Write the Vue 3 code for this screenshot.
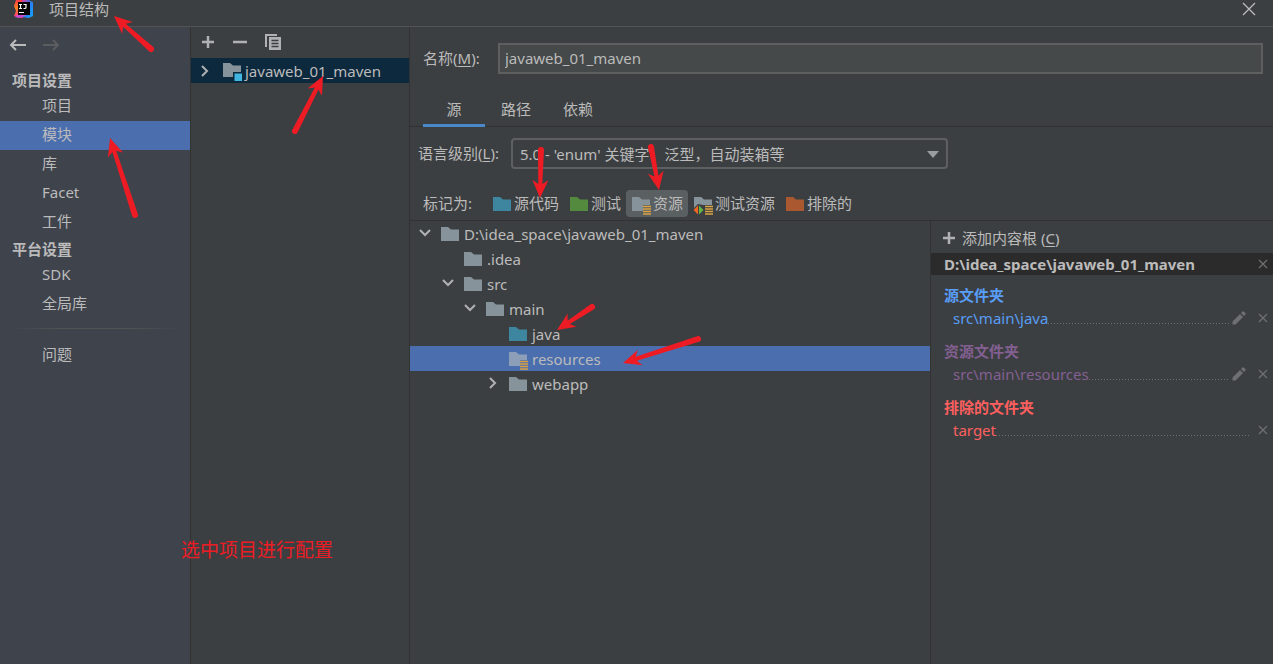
<script setup>
import { ref } from 'vue'

const projectItems = ['项目', '模块', '库', 'Facet', '工件']
const platformItems = ['SDK', '全局库']
const activeItem = ref('模块')

const tabs = ['源', '路径', '依赖']
const activeTab = ref('源')

const moduleName = ref('javaweb_01_maven')
const level = ref('5')

const marks = [
  { label: '源代码', kind: 'source' },
  { label: '测试', kind: 'test' },
  { label: '资源', kind: 'resource' },
  { label: '测试资源', kind: 'test-resource' },
  { label: '排除的', kind: 'excluded' },
]
const activeMark = ref('资源')

const tree = [
  { name: 'D:\\idea_space\\javaweb_01_maven', depth: 0, chevron: 'down', kind: 'plain' },
  { name: '.idea', depth: 1, chevron: '', kind: 'plain' },
  { name: 'src', depth: 1, chevron: 'down', kind: 'plain' },
  { name: 'main', depth: 2, chevron: 'down', kind: 'plain' },
  { name: 'java', depth: 3, chevron: '', kind: 'source' },
  { name: 'resources', depth: 3, chevron: '', kind: 'resource' },
  { name: 'webapp', depth: 3, chevron: 'right', kind: 'plain' },
]
const activeNode = ref('resources')

const groups = [
  { title: '源文件夹', path: 'src\\main\\java', tone: 'blue', editable: true },
  { title: '资源文件夹', path: 'src\\main\\resources', tone: 'purple', editable: true },
  { title: '排除的文件夹', path: 'target', tone: 'red', editable: false },
]

// Each arrow: tip x, tip y, tail x, tail y
const arrows = [
  [114, 16, 151, 49],
  [110, 138, 135, 215],
  [323, 76, 295, 131],
  [540, 198, 541, 150],
  [659, 190, 651, 147],
  [557, 330, 592, 307],
  [623, 363, 698, 339],
].map(([x, y, tx, ty]) => {
  const length = Math.hypot(tx - x, ty - y)
  const angle = (Math.atan2(ty - y, tx - x) * 180) / Math.PI
  return {
    transform: `translate(${x} ${y}) rotate(${angle})`,
    d: `M0 0L18 -8L14 -2L${length} -3A3 3 0 0 1 ${length} 3L14 2L18 8Z`,
  }
})

const folderFill = {
  plain: '#87939a',
  source: '#3e86a0',
  test: '#538a3e',
  resource: '#87939a',
  'test-resource': '#87939a',
  excluded: '#a9582f',
}
</script>

<template>
  <div class="window">
    <header class="titlebar">
      <svg class="logo" width="22" height="22" viewBox="0 0 22 22" aria-hidden="true">
        <defs>
          <linearGradient id="logo-left" x1="0" y1="0" x2="0" y2="1">
            <stop offset="0" stop-color="#fe2857" />
            <stop offset="0.5" stop-color="#fc801d" />
            <stop offset="1" stop-color="#ff318c" />
          </linearGradient>
          <linearGradient id="logo-right" x1="0" y1="0" x2="1" y2="1">
            <stop offset="0" stop-color="#ff318c" />
            <stop offset="0.5" stop-color="#2b7df5" />
            <stop offset="1" stop-color="#12a5fa" />
          </linearGradient>
        </defs>
        <path d="M3 3L9 1L12 12L10 21L4 20L1 19L3 14L1 9Z" fill="url(#logo-left)" />
        <path d="M9 1L15 1L17 4L20 5L20 19L16 21L9 20Z" fill="url(#logo-right)" />
        <path d="M4 18H14L9 20L6 21L2 20Z" fill="#c34dd0" />
        <rect x="5" y="5" width="12" height="13" fill="#050505" />
        <path d="M6 7.500h3M7.500 7.500v4M6 11.500h3M10.500 7.500h2.500v3q0 1-1.200 1H10.500M6 15.500h5" stroke="#fff" stroke-width="1.200" fill="none" />
      </svg>
      <h1>项目结构</h1>
      <button class="close" type="button" aria-label="关闭">
        <svg width="14" height="14" viewBox="0 0 14 14"><path d="M1 1L13 13M13 1L1 13" stroke="#bbb" stroke-width="1.300" /></svg>
      </button>
    </header>

    <div class="body">
      <nav class="sidebar">
        <div class="history">
          <button type="button" aria-label="后退">
            <svg width="18" height="14" viewBox="0 0 18 14"><path d="M17 7H2M7 2L2 7L7 12" fill="none" stroke="#bbb" stroke-width="2" /></svg>
          </button>
          <button type="button" aria-label="前进" disabled>
            <svg width="18" height="14" viewBox="0 0 18 14"><path d="M1 7H16M11 2L16 7L11 12" fill="none" stroke="#5b5d5f" stroke-width="2" /></svg>
          </button>
        </div>
        <h2>项目设置</h2>
        <button v-for="item in projectItems" :key="item" type="button" class="nav-item" :class="{ active: item === activeItem }" @click="activeItem = item">{{ item }}</button>
        <h2>平台设置</h2>
        <button v-for="item in platformItems" :key="item" type="button" class="nav-item" :class="{ active: item === activeItem }" @click="activeItem = item">{{ item }}</button>
        <hr />
        <button type="button" class="nav-item" :class="{ active: activeItem === '问题' }" @click="activeItem = '问题'">问题</button>
      </nav>

      <section class="modules">
        <div class="tools">
          <button type="button" aria-label="添加">
            <svg width="14" height="14" viewBox="0 0 14 14"><path d="M7 1V13M1 7H13" stroke="#afb1b3" stroke-width="2.500" /></svg>
          </button>
          <button type="button" aria-label="移除">
            <svg width="14" height="14" viewBox="0 0 14 14"><path d="M0 7H14" stroke="#afb1b3" stroke-width="2.500" /></svg>
          </button>
          <button type="button" aria-label="复制">
            <svg width="18" height="18" viewBox="0 0 18 18">
              <path d="M0 14V1H12V3H2V14Z" fill="#afb1b3" />
              <path d="M4 4H16V17H4Z" fill="#afb1b3" />
              <path d="M6.500 7.500H13.500M6.500 10.500H13.500M6.500 13.500H13.500" stroke="#3c3f41" stroke-width="1.300" />
            </svg>
          </button>
        </div>
        <button type="button" class="module">
          <svg class="twist" width="14" height="14" viewBox="0 0 14 14"><path d="M4 2L9 7L4 12" fill="none" stroke="#afb1b3" stroke-width="2" /></svg>
          <svg width="20" height="20" viewBox="0 0 20 20">
            <path d="M1 2H8L11 4.500H19V16H1Z" fill="#87939a" />
            <path d="M11 11H20V20H11Z" fill="#0d293e" />
            <path d="M12.500 12.500H20V20H12.500Z" fill="#40b6e0" />
          </svg>
          <span>javaweb_01_maven</span>
        </button>
      </section>

      <main class="editor">
        <div class="name-row">
          <label for="module-name">名称(<u>M</u>):</label>
          <input id="module-name" v-model="moduleName" type="text" />
        </div>

        <div class="tabs" role="tablist">
          <button v-for="tab in tabs" :key="tab" type="button" role="tab" :aria-selected="tab === activeTab" :class="{ active: tab === activeTab }" @click="activeTab = tab">{{ tab }}</button>
        </div>

        <div class="level-row">
          <label for="level">语言级别(<u>L</u>):</label>
          <div class="select-box">
            <select id="level" v-model="level">
              <option value="5">5.0 - 'enum' 关键字，泛型，自动装箱等</option>
            </select>
            <svg width="12" height="8" viewBox="0 0 12 8" aria-hidden="true"><path d="M0 1H12L6 8Z" fill="#9a9da0" /></svg>
          </div>
        </div>

        <div class="mark-row">
          <span class="mark-label">标记为:</span>
          <button v-for="mark in marks" :key="mark.label" type="button" :class="{ active: mark.label === activeMark }" @click="activeMark = mark.label">
            <svg width="20" height="20" viewBox="0 0 20 20">
              <path v-if="mark.kind === 'resource'" d="M1 2H8L11 4.500H19V10H12V16H1Z" :fill="folderFill[mark.kind]" />
              <path v-else-if="mark.kind === 'test-resource'" d="M1 2H8L11 4.500H19V10H10L5 9L1 13Z" :fill="folderFill[mark.kind]" />
              <path v-else d="M1 2H8L11 4.500H19V16H1Z" :fill="folderFill[mark.kind]" />
              <path v-if="mark.kind.includes('resource')" d="M12 11.500H20M12 14H20M12 16.500H20M12 19H20" stroke="#d9a343" stroke-width="1.400" />
              <template v-if="mark.kind === 'test-resource'">
                <path d="M5 10.500V19.500L0.500 15Z" fill="#f26522" />
                <path d="M6 10.500V19.500L10.500 15Z" fill="#62b543" />
              </template>
            </svg>
            <span>{{ mark.label }}</span>
          </button>
        </div>

        <div class="content">
          <div class="tree" role="tree">
            <div v-for="node in tree" :key="node.name" role="treeitem" class="node" :class="['depth-' + node.depth, { active: node.name === activeNode }]" @click="activeNode = node.name">
              <svg class="twist" width="14" height="14" viewBox="0 0 14 14">
                <path v-if="node.chevron === 'down'" d="M2 3L7 8L12 3" fill="none" stroke="#afb1b3" stroke-width="2" />
                <path v-if="node.chevron === 'right'" d="M4 1L9 6L4 11" fill="none" stroke="#afb1b3" stroke-width="2" />
              </svg>
              <svg class="folder" width="20" height="20" viewBox="0 0 20 20">
                <path v-if="node.kind === 'resource'" d="M1 2H8L11 4.500H19V10H12V16H1Z" fill="#8d9fb8" />
                <path v-else d="M1 2H8L11 4.500H19V16H1Z" :fill="folderFill[node.kind]" />
                <path v-if="node.kind === 'resource'" d="M12 11.500H20M12 14H20M12 16.500H20M12 19H20" stroke="#d9a343" stroke-width="1.400" />
              </svg>
              <span>{{ node.name }}</span>
            </div>
          </div>

          <aside class="roots">
            <button type="button" class="add-root">
              <svg width="14" height="14" viewBox="0 0 14 14"><path d="M7 1V13M1 7H13" stroke="#afb1b3" stroke-width="2.500" /></svg>
              <span>添加内容根 (<u>C</u>)</span>
            </button>
            <div class="root-head">
              <strong>D:\idea_space\javaweb_01_maven</strong>
              <button type="button" aria-label="移除内容根">
                <svg width="10" height="10" viewBox="0 0 10 10"><path d="M1 1L9 9M9 1L1 9" stroke="#6e7072" stroke-width="1.200" /></svg>
              </button>
            </div>
            <section v-for="group in groups" :key="group.title" class="group" :class="group.tone">
              <h3>{{ group.title }}</h3>
              <div class="entry">
                <a href="#">{{ group.path }}</a>
                <i class="dots"></i>
                <button v-if="group.editable" type="button" class="edit" aria-label="编辑">
                  <svg width="14" height="14" viewBox="0 0 14 14"><path d="M0.500 13.500V10.500L8 3L11 6L3.500 13.500ZM9 2L10.500 0.500Q11.200 0 12 0.700L13.300 2Q14 2.800 13.500 3.500L12 5Z" fill="#6e7072" /></svg>
                </button>
                <button type="button" aria-label="移除">
                  <svg width="10" height="10" viewBox="0 0 10 10"><path d="M1 1L9 9M9 1L1 9" stroke="#6e7072" stroke-width="1.200" /></svg>
                </button>
              </div>
            </section>
          </aside>
        </div>
      </main>
    </div>

    <svg class="arrows" aria-hidden="true">
      <path v-for="arrow in arrows" :key="arrow.transform" :d="arrow.d" :transform="arrow.transform" fill="#ed1c24" />
    </svg>
    <p class="note">选中项目进行配置</p>
  </div>
</template>

<style>
body {
  margin: 0;
  background: #3c3f41;
}
</style>

<style scoped>
.window {
  position: relative;
  display: flex;
  flex-direction: column;
  min-height: 100vh;
  overflow: hidden;
  background: #3c3f41;
  color: #bbb;
  font: 15px/20px "Noto Sans", "Noto Sans CJK SC", sans-serif;
}
.window * {
  box-sizing: border-box;
}
h1, h2, h3, p {
  margin: 0;
  font-size: 15px;
}
svg {
  display: block;
  flex: none;
}
button {
  margin: 0;
  padding: 0;
  border: 0;
  background: none;
  color: inherit;
  font: inherit;
  white-space: nowrap;
}
button, input, select {
  outline: none;
}
u {
  text-underline-offset: 2px;
}

.titlebar {
  display: flex;
  align-items: flex-start;
  height: 27px;
  padding: 0 17px 0 13px;
  border-bottom: 1px solid #515355;
}
.logo {
  margin-top: -3px;
}
h1 {
  flex: 1;
  margin-left: 14px;
  font-weight: 400;
  line-height: 18px;
}
.close {
  padding-top: 2px;
}

.body {
  display: flex;
  flex: 1;
}
.sidebar {
  display: flex;
  flex-direction: column;
  width: 191px;
  border-right: 1px solid #323232;
  background: #3f434c;
}
.history {
  display: flex;
  gap: 15px;
  height: 41px;
  padding: 11px 9px 0;
  align-items: flex-start;
}
h2 {
  padding-left: 12px;
  line-height: 24px;
  font-weight: 700;
}
.nav-item {
  padding: 0 0 2px 42px;
  line-height: 27px;
  text-align: left;
}
.nav-item.active {
  background: #4b6eaf;
}
hr {
  width: 170px;
  height: 1px;
  margin: 9px 0 12px 10px;
  border: 0;
  background: linear-gradient(90deg, transparent, #515355 30%, #515355 70%, transparent);
}

.modules {
  width: 219px;
  border-right: 1px solid #323232;
}
.tools {
  display: flex;
  align-items: center;
  gap: 18px;
  height: 31px;
  padding: 0 0 2px 10px;
}
.module {
  display: flex;
  align-items: center;
  width: 100%;
  height: 25px;
  padding-left: 7px;
  background: #0d293e;
}
.module .twist {
  margin-right: 10px;
}
.module span {
  margin-left: 3px;
}

.editor {
  display: flex;
  flex: 1;
  flex-direction: column;
  min-width: 0;
}
.name-row {
  display: flex;
  align-items: center;
  padding: 16px 10px 0 13px;
}
.name-row label {
  width: 75px;
  padding-bottom: 2px;
}
input {
  flex: 1;
  height: 31px;
  min-width: 0;
  padding: 0 5px 2px;
  border: 2px solid #5e6060;
  border-radius: 0;
  background: #45494a;
  color: inherit;
  font: inherit;
}
.tabs {
  display: flex;
  margin-top: 20px;
  padding-left: 13px;
  border-bottom: 1px solid #323232;
}
.tabs button {
  min-width: 62px;
  height: 33px;
  margin-bottom: -1px;
  border-bottom: 3px solid transparent;
}
.tabs .active {
  border-bottom-color: #4a88c7;
}
.level-row {
  display: flex;
  align-items: center;
  margin-top: 11px;
  padding-left: 8px;
}
.level-row label {
  width: 93px;
  padding-bottom: 2px;
}
.select-box {
  position: relative;
  flex: 0 1 437px;
}
select {
  width: 100%;
  height: 31px;
  padding: 0 30px 0 7px;
  border: 2px solid #5e6060;
  border-radius: 4px;
  appearance: none;
  background: #3c3f41;
  color: inherit;
  font: inherit;
}
.select-box svg {
  position: absolute;
  top: 12px;
  right: 9px;
  pointer-events: none;
}
.mark-row {
  display: flex;
  align-items: center;
  margin-top: 21px;
  padding: 0 0 3px 13px;
  border-bottom: 1px solid #323232;
}
.mark-row span {
  padding-bottom: 2px;
}
.mark-label {
  width: 64px;
}
.mark-row button {
  display: flex;
  align-items: center;
  gap: 2px;
  height: 27px;
  padding: 0 5px;
  border-radius: 4px;
}
.mark-row svg {
  margin-top: 3px;
}
.mark-row .active {
  background: #5a5f61;
}

.content {
  display: flex;
  flex: 1;
}
.tree {
  flex: 1;
  min-width: 0;
}
.node {
  display: flex;
  align-items: center;
  height: 25px;
  padding-left: 8px;
}
.node .twist {
  margin-right: 8px;
}
.node .folder {
  margin-top: 2px;
}
.node span {
  margin-left: 4px;
}
.node.active {
  background: #4b6eaf;
}
.node.depth-1 {
  padding-left: 31px;
}
.node.depth-2 {
  padding-left: 53px;
}
.node.depth-3 {
  padding-left: 76px;
}

.roots {
  width: 343px;
  border-left: 1px solid #323232;
}
.add-root {
  display: flex;
  align-items: center;
  gap: 6px;
  height: 32px;
  padding: 1px 0 0 11px;
}
.root-head {
  display: flex;
  align-items: center;
  justify-content: space-between;
  height: 22px;
  padding: 0 5px 0 13px;
  background: #2b2b2b;
}
.group {
  height: 56px;
  padding: 9px 5px 0 13px;
}
.group h3 {
  line-height: 22px;
}
.entry {
  display: flex;
  align-items: center;
  height: 24px;
  padding-left: 9px;
}
.entry a {
  color: inherit;
  text-decoration: none;
}
.dots {
  flex: 1;
  height: 1px;
  margin: 10px 7px 0 0;
  background: repeating-linear-gradient(90deg, #6e7072 0 1px, transparent 1px 3px);
}
.edit {
  margin: 0 12px 0 -4px;
}
.blue {
  color: #589df6;
}
.purple {
  color: #835f92;
}
.red {
  color: #ff5f5f;
}

.arrows {
  position: absolute;
  inset: 0;
  width: 100%;
  height: 100%;
  pointer-events: none;
}
.note {
  position: absolute;
  top: 536px;
  left: 181px;
  color: #ed1c24;
  font-size: 19px;
  line-height: 28px;
  pointer-events: none;
}
</style>
